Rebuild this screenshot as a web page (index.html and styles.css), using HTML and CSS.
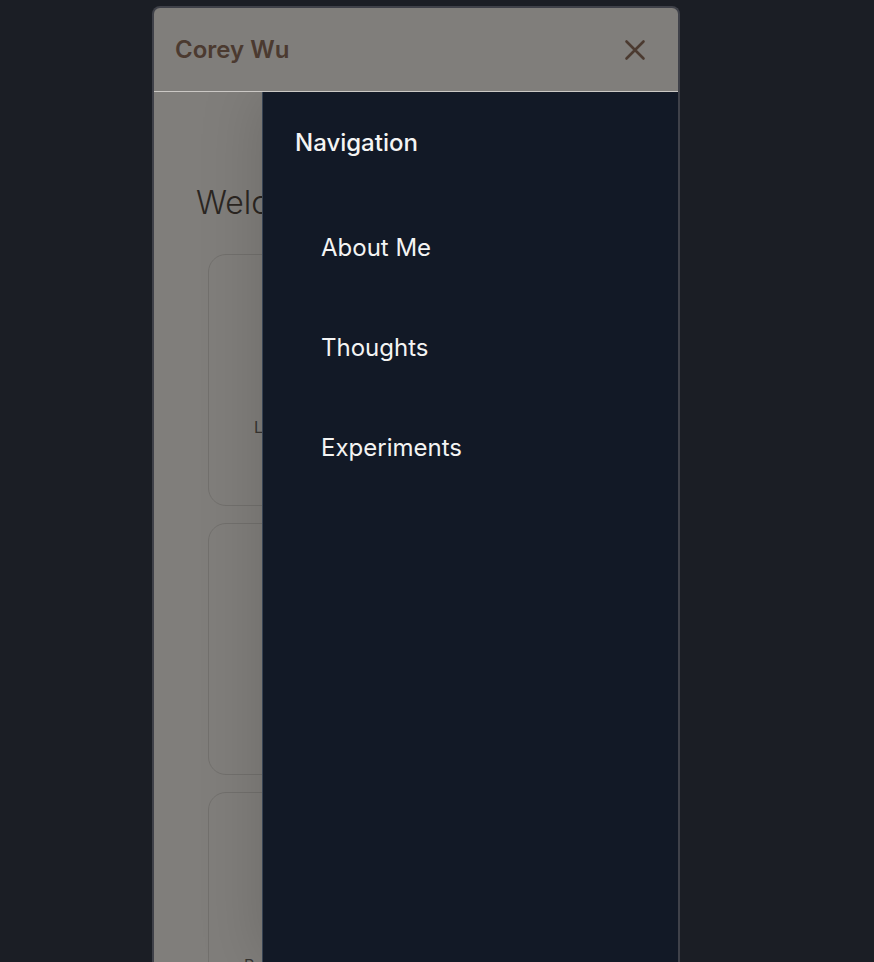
FILE: index.html
```html
<!DOCTYPE html>
<html lang="en">
<head>
<meta charset="utf-8">
<meta name="viewport" content="width=device-width, initial-scale=1">
<title>Corey Wu</title>
<link rel="stylesheet" href="styles.css">
</head>
<body>
<div class="device">
  <header class="header">
    <a class="brand" href="#">Corey Wu</a>
    <button class="close" type="button" aria-label="Close">
      <svg viewBox="0 0 24 24" width="24" height="24" aria-hidden="true"><path d="M3.5 3.5 20.5 20.5M20.5 3.5 3.5 20.5"/></svg>
    </button>
  </header>
  <div class="stage">
    <main class="page">
      <h1 class="title">Welcome</h1>
      <div class="cards">
        <section class="card"><p class="label">L</p></section>
        <section class="card"></section>
        <section class="card card-wide"><p class="label">Pr</p></section>
      </div>
    </main>
    <nav class="drawer" aria-labelledby="nav-title">
      <h2 class="drawer-title" id="nav-title">Navigation</h2>
      <ul class="links">
        <li><a class="link" href="#">About Me</a></li>
        <li><a class="link" href="#">Thoughts</a></li>
        <li><a class="link" href="#">Experiments</a></li>
      </ul>
    </nav>
  </div>
</div>
</body>
</html>
```
FILE: styles.css
```css
* {
  box-sizing: border-box;
}

body {
  margin: 0;
  height: 100vh;
  padding: 6px 194px 0 152px;
  overflow: hidden;
  background: #1b1e25;
  font-family: Inter, "Liberation Sans", sans-serif;
}

h1, h2, p, ul {
  margin: 0;
  padding: 0;
}

.device {
  display: flex;
  flex-direction: column;
  height: 100%;
  border: 2px solid #3f4149;
  border-bottom: 0;
  border-radius: 8px 8px 0 0;
  background: #807e7b;
  overflow: hidden;
}

.header {
  display: flex;
  align-items: center;
  justify-content: space-between;
  flex: none;
  height: 84px;
  padding: 0 31px 0 21px;
  border-bottom: 1px solid #cbc8c5;
}

.brand {
  color: #4b3a30;
  font-size: 24px;
  font-weight: 600;
  line-height: 32px;
  text-decoration: none;
}

.close {
  display: flex;
  padding: 0;
  border: 0;
  background: none;
  color: #4b3a30;
}

.close svg {
  fill: none;
  stroke: currentColor;
  stroke-width: 2.6;
  stroke-linecap: round;
}

.stage {
  position: relative;
  flex: 1;
  min-height: 0;
  overflow: hidden;
}

.page {
  padding: 88px 54px 0 42px;
}

.title {
  color: #2b2622;
  font-size: 32px;
  font-weight: 300;
  line-height: 46px;
}

.cards {
  display: grid;
  gap: 17px;
  padding: 28px 0 0 12px;
}

.card {
  height: 252px;
  padding: 160px 45px 0;
  border: 1px solid #72706d;
  border-radius: 18px;
}

.card-wide {
  padding: 160px 35px 0;
}

.label {
  color: #383532;
  font-size: 16px;
  line-height: 24px;
}

.drawer {
  position: absolute;
  inset: 0 0 0 108px;
  padding: 35px 32px;
  border-left: 1px solid #364252;
  background: #121926;
  box-shadow: 0 0 60px rgba(0, 0, 0, 0.16);
  color: #f4f4f3;
}

.drawer-title {
  font-size: 24px;
  font-weight: 500;
  line-height: 32px;
}

.links {
  display: grid;
  gap: 68px;
  padding: 73px 26px 0;
  list-style: none;
}

.link {
  display: block;
  color: inherit;
  font-size: 24px;
  line-height: 32px;
  text-decoration: none;
}
```
